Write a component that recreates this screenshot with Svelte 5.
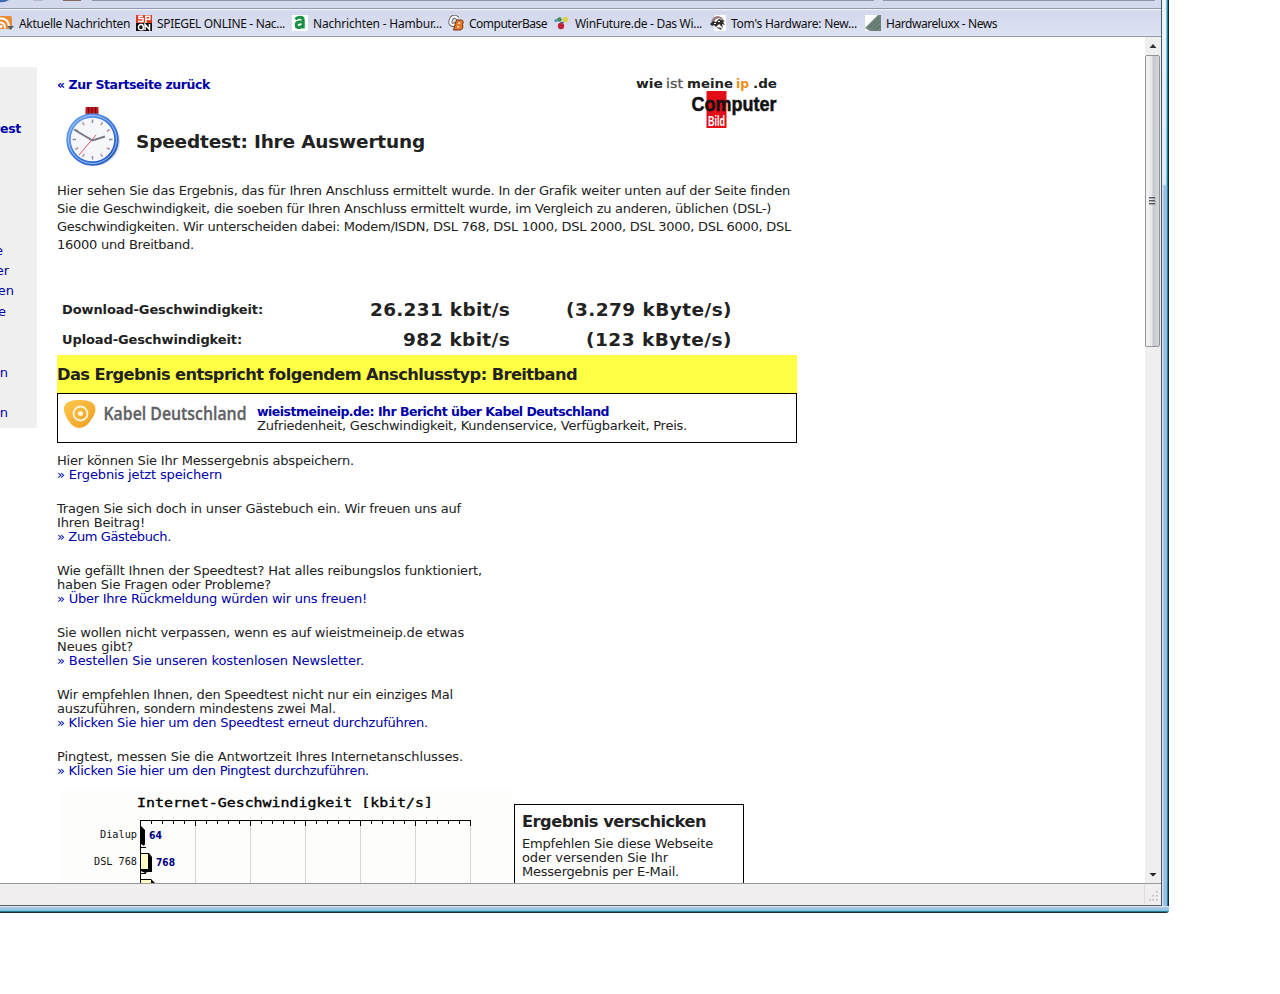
<script>
  // Spreads the letters of a line so that it takes the given width.
  function fit(node, width) {
    node.style.letterSpacing = '0px';
    const natural = node.getBoundingClientRect().width;
    const count = [...node.textContent].length;
    node.style.letterSpacing = (width - natural) / count + 'px';
  }

  const bookmarks = [
    { icon: 'rss', text: 'Aktuelle Nachrichten', w: 111, slot: 138 },
    { icon: 'spon', text: 'SPIEGEL ONLINE - Nac...', w: 128, slot: 156 },
    { icon: 'abendblatt', text: 'Nachrichten - Hambur...', w: 129, slot: 156 },
    { icon: 'cb', text: 'ComputerBase', w: 78, slot: 106 },
    { icon: 'winfuture', text: 'WinFuture.de - Das Wi...', w: 127, slot: 156 },
    { icon: 'toms', text: "Tom's Hardware: New...", w: 126, slot: 155 },
    { icon: 'luxx', text: 'Hardwareluxx - News', w: 111, slot: 140 }
  ];

  const nav = [
    { text: 'test', right: 21, h: 122, bold: true },
    { text: 'e', right: 3, h: 20 },
    { text: 'er', right: 9, h: 20 },
    { text: 'en', right: 14, h: 21 },
    { text: 'e', right: 6, h: 61 },
    { text: 'n', right: 8, h: 40 },
    { text: 'n', right: 8, h: 20 }
  ];

  const intro = [
    ['Hier sehen Sie das Ergebnis, das für Ihren Anschluss ermittelt wurde. In der Grafik weiter unten auf der Seite finden', 733],
    ['Sie die Geschwindigkeit, die soeben für Ihren Anschluss ermittelt wurde, im Vergleich zu anderen, üblichen (DSL-)', 714],
    ['Geschwindigkeiten. Wir unterscheiden dabei: Modem/ISDN, DSL 768, DSL 1000, DSL 2000, DSL 3000, DSL 6000, DSL', 734],
    ['16000 und Breitband.', 137]
  ];

  const speeds = [
    { label: 'Download-Geschwindigkeit:', lw: 201, bits: '26.231 kbit/s', bw: 140, bytes: '(3.279 kByte/s)', yw: 166 },
    { label: 'Upload-Geschwindigkeit:', lw: 180, bits: '982 kbit/s', bw: 107, bytes: '(123 kByte/s)', yw: 146 }
  ];

  const notes = [
    { lines: [['Hier können Sie Ihr Messergebnis abspeichern.', 297]], link: ['» Ergebnis jetzt speichern', 165] },
    { lines: [['Tragen Sie sich doch in unser Gästebuch ein. Wir freuen uns auf', 404], ['Ihren Beitrag!', 88]], link: ['» Zum Gästebuch.', 114] },
    { lines: [['Wie gefällt Ihnen der Speedtest? Hat alles reibungslos funktioniert,', 425], ['haben Sie Fragen oder Probleme?', 214]], link: ['» Über Ihre Rückmeldung würden wir uns freuen!', 310] },
    { lines: [['Sie wollen nicht verpassen, wenn es auf wieistmeineip.de etwas', 407], ['Neues gibt?', 76]], link: ['» Bestellen Sie unseren kostenlosen Newsletter.', 307] },
    { lines: [['Wir empfehlen Ihnen, den Speedtest nicht nur ein einziges Mal', 396], ['auszuführen, sondern mindestens zwei Mal.', 279]], link: ['» Klicken Sie hier um den Speedtest erneut durchzuführen.', 371] },
    { lines: [['Pingtest, messen Sie die Antwortzeit Ihres Internetanschlusses.', 406]], link: ['» Klicken Sie hier um den Pingtest durchzuführen.', 312] }
  ];

  const send = [['Empfehlen Sie diese Webseite', 191], ['oder versenden Sie Ihr', 146], ['Messergebnis per E-Mail.', 157]];

  const ticks = Array.from({ length: 31 }, (_, i) => ({ x: 83.5 + i * 11, major: i % 5 === 0 }));
  const hours = Array.from({ length: 12 }, (_, i) => i * 30);
</script>

<div class="window">
  <div class="inner">
    <svg class="toolbar" width="1161" height="9" viewBox="0 0 1161 9">
      <path d="M-4 0H9Q3 4-4 1z" fill="#3f68b5" />
      <path d="M33 0h10v1H33z" fill="#b5b7c8" />
      <path d="M63 0h18v1H63z" fill="#826e60" />
      <path d="M92 0H874M883 0H1155" stroke="#8f93ab" stroke-width="2" />
      <path d="M0 8.500H1161" stroke="#9499ab" />
    </svg>

    <nav class="bookmarks">
      {#each bookmarks as b}
        <a class="bookmark" style:width="{b.slot}px">
          <svg width="16" height="16" viewBox="0 0 16 16">
            {#if b.icon === 'rss'}
              <rect y="1" width="14" height="13" rx="2" fill="#ed8c35" />
              <path d="M2 3.500Q11 3 11 13M2 7.500q5 0 5 6" fill="none" stroke="#fff" stroke-width="2" />
              <circle cx="3" cy="11.500" r="1.400" fill="#fff" />
              <path d="M9 11h7l-3.500 4z" fill="#555b66" />
            {:else if b.icon === 'spon'}
              <rect width="16" height="8" fill="#dc3e23" /><rect y="8" width="16" height="8" fill="#111" />
              <path d="M7 1.300H3v2.200h4v3H2M9.800 8V1.300h4v3H10" fill="none" stroke="#fff" stroke-width="1.500" />
              <path d="M7 10Q3 8.500 2.500 12T7 14.500Q8 9 5 9.700M9 15V9.500l4.500 5V9" fill="none" stroke="#fff" stroke-width="1.500" />
            {:else if b.icon === 'abendblatt'}
              <rect width="16" height="16" fill="#fff" />
              <path d="M3.500 4.300Q5 2.300 8 2.300q3.300 0 3.300 3v8.200M11 7H7Q4.200 7.200 4.200 10q0 2.500 2.500 2.500Q10 12.500 10.800 10" fill="none" stroke="#159044" stroke-width="2.900" />
            {:else if b.icon === 'cb'}
              <path d="M10 3.500Q5-.5 3 4.500T5 10l3-1" fill="none" stroke="#645a55" stroke-width="4" />
              <path d="M10 3.500Q5-.5 3 4.500T5 10l3-1" fill="none" stroke="#fff" stroke-width="2.200" />
              <path d="M8.500 5h5.200q2.500 1 .8 4.500 1.500 5.500-3 5.500H5.500z" fill="#e87722" stroke="#71351a" />
              <path d="M10.500 7.500h2l-.5 1.300h-2zM9.500 11.200h2l-.5 1.300H9z" fill="#fff" />
            {:else if b.icon === 'winfuture'}
              <circle cx="2" cy="5.500" r="1.500" fill="#4d8bc4" /><circle cx="5.500" cy="4.500" r="2.300" fill="#419154" />
              <circle cx="11.500" cy="4.500" r="2.800" fill="#d9d347" /><circle cx="7" cy="11" r="3.200" fill="#c52237" />
              <path d="m6 8 4-1" stroke="#555" />
            {:else if b.icon === 'toms'}
              <path d="M5 0h11v16H4z" fill="#fff" />
              <path d="M1 7Q3 1 8 1q5 1 6 5l-3-2q-4-2-7 2z" fill="#9a7775" />
              <path d="M0 9 3 6l3 1 3-3 6 2-2 1 2 3-3-1 1 4-4-4-3 3-2-2-2 1z" fill="#312d2b" />
              <path d="m7 12 5 1-1 2-4-2z" fill="#555" />
              <path d="M8 6h2v1H8zM4 8h2v1H4z" fill="#fff" />
            {:else}
              <rect width="16" height="16" fill="#fff" /><path d="M0 13 13 0h3v16H5z" fill="#6c8378" />
              <path d="m5 12 9-9M8 13l7-7M10 15l5-4" stroke="#566f63" />
            {/if}
          </svg>
          <span use:fit={b.w}>{b.text}</span>
        </a>
      {/each}
    </nav>

    <div class="view">
      <aside>
        {#each nav as n}
          <a class:bold={n.bold} style:width="{n.right}px" style:height="{n.h}px">{n.text}</a>
        {/each}
      </aside>

      <main>
        <header>
          <div class="lead">
            <a class="back"><span use:fit={153}>« Zur Startseite zurück</span></a>
            <div class="title">
              <svg width="56" height="62" viewBox="0 0 56 62">
                <defs>
                  <linearGradient id="rim" x1="0" y1="0" x2="1" y2="1">
                    <stop offset="0" stop-color="#6ea3ee" /><stop offset=".5" stop-color="#3b78dc" /><stop offset="1" stop-color="#1d53bd" />
                  </linearGradient>
                </defs>
                <ellipse cx="29" cy="36.500" rx="26" ry="24.500" fill="#dedede" />
                <rect x="20.500" y="2" width="13" height="8" rx="1" fill="#b9191d" />
                <path d="M23.500 2v8M27 2v8M30.500 2v8" stroke="#74070a" />
                <circle cx="27.500" cy="34.500" r="24" fill="#f6f7fb" stroke="url(#rim)" stroke-width="4.500" />
                <circle cx="27.500" cy="34.500" r="24" fill="none" stroke="#bcd7fa" stroke-width=".8" />
                {#each hours as a}
                  <path d="M27.500 14.500v3.500" transform="rotate({a} 27.500 34.500)" stroke={a % 90 ? '#bb94a0' : '#8b8f9b'} stroke-width="1.500" />
                {/each}
                <path d="M9 24.500 27.500 35.500 40 31.500" fill="none" stroke="#737a86" stroke-width="2" />
                <path d="m31 30-17 20" stroke="#dc5364" />
              </svg>
              <h1><span use:fit={289}>Speedtest: Ihre Auswertung</span></h1>
            </div>
          </div>
          <svg class="brand" width="144" height="58" viewBox="0 0 144 58">
            <g font-family="'DejaVu Sans'" font-size="13" font-weight="bold" fill="#222">
              <text x="1" y="14" textLength="27" lengthAdjust="spacingAndGlyphs">wie</text>
              <text x="31" y="14" textLength="17" lengthAdjust="spacingAndGlyphs" font-weight="normal" fill="#555" stroke="#555" stroke-width=".3">ist</text>
              <text x="52" y="14" textLength="46" lengthAdjust="spacingAndGlyphs">meine</text>
              <text x="101" y="14" textLength="13" lengthAdjust="spacingAndGlyphs" fill="#f28c16">ip</text>
              <text x="118" y="14" textLength="24" lengthAdjust="spacingAndGlyphs">.de</text>
            </g>
            <rect x="71.500" y="17" width="20" height="37" fill="#e30d18" />
            <g font-family="'Liberation Sans'" font-weight="bold">
              <text x="56.500" y="36.500" font-size="21" textLength="85" lengthAdjust="spacingAndGlyphs" fill="#111" stroke="#111" stroke-width=".5">Computer</text>
              <text x="73" y="52" font-size="15" textLength="17" lengthAdjust="spacingAndGlyphs" fill="#fff">Bild</text>
            </g>
          </svg>
        </header>

        <div class="intro">
          {#each intro as [t, w]}<div><span use:fit={w}>{t}</span></div>{/each}
        </div>

        <div class="speeds">
          {#each speeds as s}
            <b><span use:fit={s.lw}>{s.label}</span></b>
            <strong><span use:fit={s.bw}>{s.bits}</span></strong>
            <strong><span use:fit={s.yw}>{s.bytes}</span></strong>
          {/each}
        </div>

        <div class="verdict"><span use:fit={520}>Das Ergebnis entspricht folgendem Anschlusstyp: Breitband</span></div>

        <div class="provider">
          <svg width="191" height="34" viewBox="0 0 191 34">
            <defs>
              <linearGradient id="amber" x1="0" y1="0" x2="1" y2="1">
                <stop offset="0" stop-color="#ffc94f" /><stop offset="1" stop-color="#ed9c20" />
              </linearGradient>
            </defs>
            <path d="M1 8Q3 1 15 1q14-1 17 6 2 6-4 14-5 8-12 8-6 0-11-8-5-8-4-13z" fill="url(#amber)" />
            <circle cx="17.500" cy="14.500" r="7" fill="none" stroke="#fff5d7" stroke-width="1.800" />
            <circle cx="17.500" cy="14.500" r="2.500" fill="#fff8df" />
            <text x="40.500" y="20.500" font-family="'Open Sans'" font-size="18" font-weight="600" fill="#606164" stroke="#606164" stroke-width=".3" textLength="143" lengthAdjust="spacingAndGlyphs">Kabel Deutschland</text>
          </svg>
          <div class="report">
            <a><span use:fit={352}>wieistmeineip.de: Ihr Bericht über Kabel Deutschland</span></a>
            <div><span use:fit={430}>Zufriedenheit, Geschwindigkeit, Kundenservice, Verfügbarkeit, Preis.</span></div>
          </div>
        </div>

        {#each notes as n}
          <div class="note">
            {#each n.lines as [t, w]}<div><span use:fit={w}>{t}</span></div>{/each}
            <a><span use:fit={n.link[1]}>{n.link[0]}</span></a>
          </div>
        {/each}

        <div class="bottom">
          <svg class="chart" width="454" height="93" viewBox="0 0 454 93">
            <rect x="3" width="451" height="93" fill="#fdfefc" />
            <text x="80" y="17" font-family="'DejaVu Sans Mono'" font-size="12.500" stroke="#000" stroke-width=".35" textLength="296" lengthAdjust="spacingAndGlyphs">Internet-Geschwindigkeit [kbit/s]</text>
            {#each ticks as t}
              {#if t.major}<path d="M{t.x} 35V93" stroke="#d5d7d5" />{/if}
              <path d="M{t.x} 30v{t.major ? 6 : 4}" stroke="#000" />
            {/each}
            <path d="M83.500 93V30.500H414" fill="none" stroke="#000" />
            <path d="M84 36l4 4v14l-1 2-3-2z" /><path d="M84 57.500h5M84 83.500h5" stroke="#000" />
            <path d="M84 63h8l3 4v15h-4l-3 1-4-2z" />
            <path d="M84 64h7v15h-7z" fill="#ffffc4" />
            <path d="M84 89h10l4 4H84z" /><path d="M84 90h10v3H84z" fill="#ffffc4" />
            <g font-family="'DejaVu Sans Mono'" font-size="10.500" fill="#111">
              <text x="43" y="48" textLength="37" lengthAdjust="spacingAndGlyphs">Dialup</text>
              <text x="37" y="75" textLength="43" lengthAdjust="spacingAndGlyphs">DSL 768</text>
            </g>
            <g font-family="'DejaVu Sans'" font-size="11" font-weight="bold" fill="#00007e">
              <text x="92" y="49" textLength="13" lengthAdjust="spacingAndGlyphs">64</text>
              <text x="99" y="76" textLength="19" lengthAdjust="spacingAndGlyphs">768</text>
            </g>
          </svg>
          <section class="send">
            <h2><span use:fit={184}>Ergebnis verschicken</span></h2>
            {#each send as [t, w]}<div><span use:fit={w}>{t}</span></div>{/each}
          </section>
        </div>
      </main>

      <div class="scroll">
        <svg width="16" height="18" viewBox="0 0 16 18"><path d="M4.500 11 8 7l3.500 4z" fill="#333" /></svg>
        <div class="thumb">
          <svg width="7" height="8" viewBox="0 0 7 8"><path d="M0 .5h6M0 3.500h6M0 6.500h6" stroke="#555861" /><path d="M0 1.500h7M0 4.500h7M0 7.500h7" stroke="#777a82" stroke-opacity=".5" /></svg>
        </div>
        <svg class="down" width="16" height="18" viewBox="0 0 16 18"><path d="M4.500 8h7L8 11.500z" fill="#222" /></svg>
      </div>
    </div>

    <footer>
      <svg width="16" height="20" viewBox="0 0 16 20"><path d="M11 7h1.500v1.500H11zM11 11h1.500v1.500H11zM7.500 11H9v1.500H7.500zM11 15h1.500v1.500H11zM7.500 15H9v1.500H7.500zM4 15h1.500v1.500H4z" fill="#b5b3ad" /></svg>
    </footer>
  </div>
  <div class="side"></div>
  <div class="base"></div>
</div>

<style>
  :global(body) { margin: 0; background: #fff; overflow: hidden; }
  .window {
    display: grid; grid-template-columns: 1162px 7px; grid-template-rows: 906px 7px;
    width: 1169px; height: 913px; overflow: hidden; border-bottom-right-radius: 3px;
    font: 13px/14px "DejaVu Sans", sans-serif; color: #222; white-space: nowrap;
  }
  .window svg { display: block; flex: none; }
  .inner {
    display: flex; flex-direction: column; box-sizing: border-box; overflow: hidden;
    border-right: 1px solid #485d68; border-bottom: 1px solid #59646c; background: #fff;
  }
  .side {
    background: linear-gradient(#ecf6fc 0, #dceefa 184px, transparent 186px),
      linear-gradient(90deg, #d9eefb 0, #aeb9dc 2px, #92c4e9 4px, #58c9f3 5px, #112b38 6px);
    background-size: 4px 100%, 100% 100%; background-repeat: no-repeat;
  }
  .base { grid-column: 1 / 3; background: linear-gradient(#e0eff7 0, #a9bddb 2px, #94cce9 4px, #48c4e4 5px, #172f38 6px); }
  .toolbar { background: #d4daee; }
  a { color: #0000a8; }
  .bookmarks {
    display: flex; align-items: center; box-sizing: border-box; height: 28px;
    border-bottom: 1px solid #9499aa; background: linear-gradient(#f6f8fd 0, #d3d8ec 2px, #d7dcef 16px, #dfe4f4);
    font: 12px/18px "Noto Sans", sans-serif;
  }
  .bookmark { display: flex; align-items: center; flex: none; gap: 5px; height: 18px; color: #111; }
  .bookmark span { padding-top: 2px; }
  .bookmark:first-child { margin-left: -2px; }
  .view { display: flex; height: 846px; overflow: hidden; }
  aside {
    display: flex; flex-direction: column; box-sizing: border-box; flex: none; width: 37px; height: 361px;
    margin-top: 30px; padding-top: 55px; overflow: hidden; background: #f0f0f0;
  }
  aside a { display: flex; flex: none; justify-content: flex-end; }
  aside .bold { font-size: 12.5px; font-weight: bold; letter-spacing: -.3px; }
  main { flex: none; box-sizing: border-box; width: 1108px; padding-left: 20px; }
  header { display: flex; justify-content: space-between; width: 722px; height: 145px; }
  .back { display: block; padding-top: 41px; font-size: 12.5px; font-weight: bold; }
  .title { display: flex; gap: 15px; padding: 13px 0 0 8px; }
  h1 { margin: 0; padding-top: 25px; font-size: 18.5px; line-height: 24px; }
  .brand { margin-top: 37px; }
  .intro { height: 113px; line-height: 18px; }
  .speeds {
    display: grid; grid-template-columns: 205px 243px 222px; grid-auto-rows: 30px; align-items: center;
    width: 670px; padding-left: 5px;
  }
  .speeds strong { justify-self: end; font-size: 18.5px; line-height: 30px; }
  .verdict {
    box-sizing: border-box; width: 740px; height: 38px; padding-top: 1px;
    font-size: 16.3px; font-weight: bold; line-height: 38px; background: #ffff43;
  }
  .provider { display: flex; box-sizing: border-box; width: 740px; height: 50px; padding: 5px 0 0 5px; border: 1px solid #000; }
  .report { padding: 6px 0 0 3px; }
  .report a { display: block; font-size: 12.5px; font-weight: bold; }
  .note { margin-bottom: 20px; }
  .provider + .note { margin-top: 11px; }
  .note a { display: block; }
  .bottom { display: flex; gap: 3px; margin-top: -8px; }
  .send { box-sizing: border-box; width: 230px; height: 110px; margin-top: 14px; padding: 5px 7px; border: 1px solid #000; }
  h2 { margin: 0 0 3px; font-size: 16.3px; line-height: 24px; }
  .scroll { display: flex; flex-direction: column; width: 16px; background: #efefef; }
  .thumb {
    display: flex; align-items: center; justify-content: center; box-sizing: border-box; width: 15px; height: 292px;
    border: 1px solid #92949a; border-radius: 2px; background: linear-gradient(90deg, #f5f5f5, #e7e7e9 45%, #c7c8cd 55%, #d6d7da);
  }
  .down { margin-top: auto; }
  footer { display: flex; justify-content: flex-end; height: 21px; border-top: 1px solid #999; background: #f0eeee; }
  footer svg { border-left: 1px solid #ddd; }
</style>
